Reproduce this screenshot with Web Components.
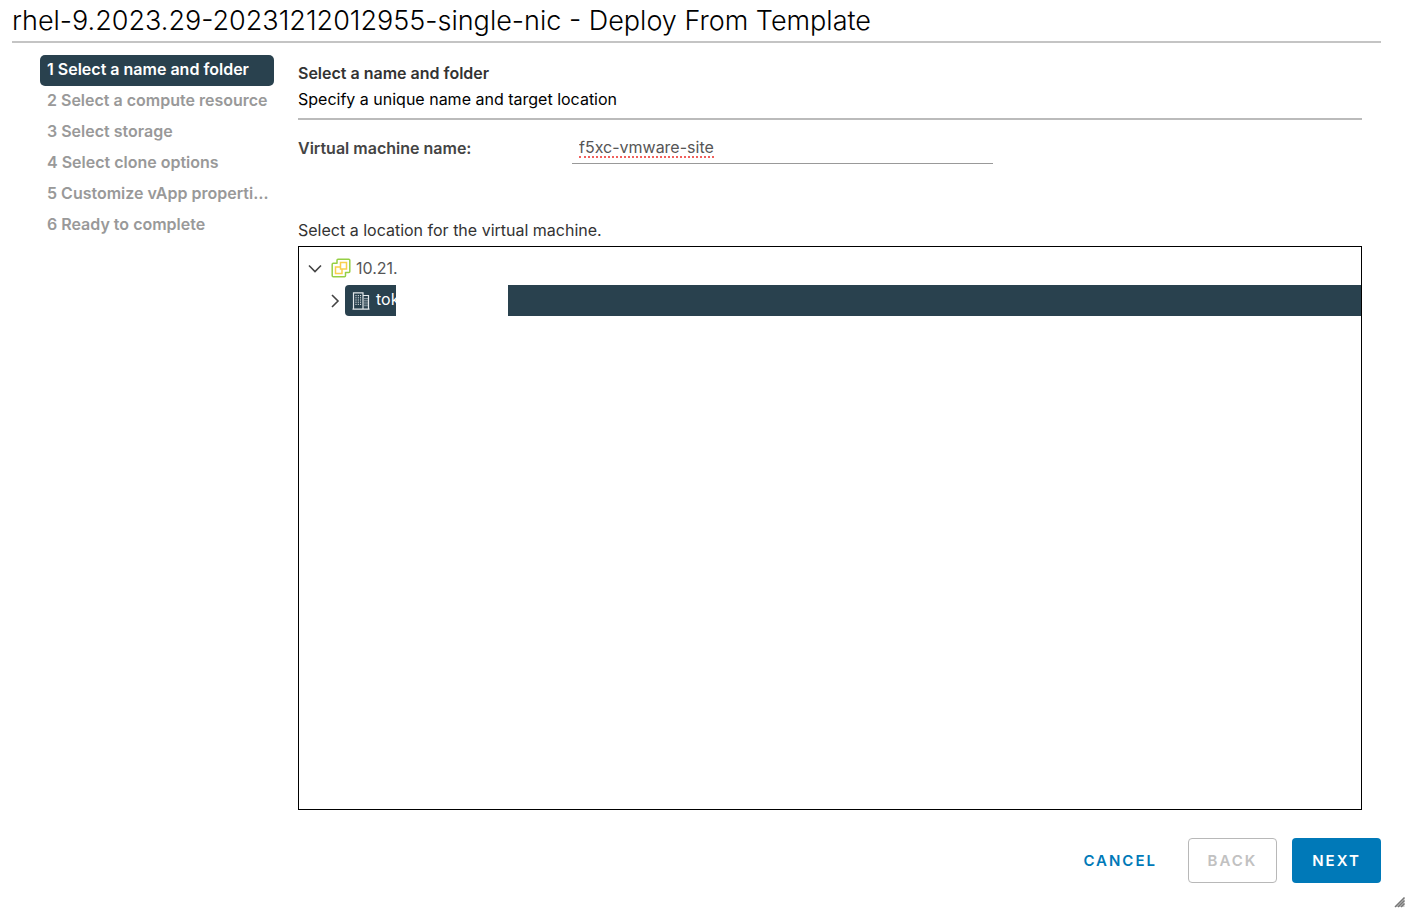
<!DOCTYPE html>
<html lang="en">
<head>
<meta charset="utf-8">
<title>Deploy From Template</title>
<style>
  html, body { margin: 0; height: 100%; background: #fff; }
  body { font: 16px/24px Inter, "Open Sans", sans-serif; color: #333; }
</style>
</head>
<body>
<wizard-dialog>
  <span slot="title">rhel-9.2023.29-20231212012955-single-nic - Deploy From Template</span>
  <wizard-steps slot="steps"></wizard-steps>
  <wizard-page slot="page">
    <span slot="heading">Select a name and folder</span>
    <span slot="description">Specify a unique name and target location</span>
    <vm-name-field></vm-name-field>
    <location-tree></location-tree>
  </wizard-page>
  <wizard-button slot="actions" kind="link">Cancel</wizard-button>
  <wizard-button slot="actions" kind="outline" disabled>Back</wizard-button>
  <wizard-button slot="actions" kind="primary">Next</wizard-button>
</wizard-dialog>

<script>
class BaseElement extends HTMLElement {
  render(html) {
    const template = document.createElement('template');
    template.innerHTML = html;
    this.attachShadow({ mode: 'open' }).append(template.content.cloneNode(true));
  }
}

customElements.define('wizard-dialog', class extends BaseElement {
  constructor() {
    super();
    this.render(`
      <style>
        :host { display: flex; flex-direction: column; box-sizing: border-box; min-height: 100vh; padding: 0 29px 29px 12px; position: relative; }
        header { border-bottom: 2px solid #c4c4c4; }
        h1 { margin: 0; padding-top: 1px; font-size: 27px; line-height: 40px; font-weight: 300; color: #000; white-space: nowrap; }
        .body { flex: 1; display: grid; grid-template-columns: 234px minmax(0, 1fr); gap: 24px; padding: 12px 19px 0 28px; }
        .body ::slotted(*) { min-width: 0; }
        footer { display: flex; justify-content: flex-end; gap: 15px; padding-top: 28px; }
        .grip { position: absolute; right: 4px; bottom: 4px; width: 12px; height: 12px; }
      </style>
      <header><h1><slot name="title"></slot></h1></header>
      <div class="body"><slot name="steps"></slot><slot name="page"></slot></div>
      <footer><slot name="actions"></slot></footer>
      <svg class="grip" viewBox="0 0 12 12" aria-hidden="true">
        <path d="M1 11 10.500 1.500V11Z" fill="#ccc"/>
        <path d="M1 11 10.500 1.500M4 11l6.500-6.500M7 11l3.500-3.500" stroke="#777" stroke-width="1.500"/>
      </svg>`);
  }
});

customElements.define('wizard-steps', class extends BaseElement {
  constructor() {
    super();
    const steps = ['Select a name and folder', 'Select a compute resource', 'Select storage',
      'Select clone options', 'Customize vApp properties', 'Ready to complete'];
    this.render(`
      <style>
        :host { display: block; }
        ol { list-style: none; margin: 0; padding: 0; }
        button { all: unset; box-sizing: border-box; display: block; width: 100%; padding: 0 5px 2px 7px; line-height: 29px;
          font-weight: 600; color: #999; white-space: nowrap; overflow: hidden; text-overflow: ellipsis; border-radius: 5px; }
        button[aria-current] { background: #29414e; color: #fff; }
      </style>
      <nav aria-label="Steps"><ol>${steps.map((s, i) =>
        `<li><button type="button" ${i ? 'disabled' : 'aria-current="step"'}>${i + 1} ${s}</button></li>`).join('')}</ol></nav>`);
  }
});

customElements.define('wizard-page', class extends BaseElement {
  constructor() {
    super();
    this.render(`
      <style>
        :host { display: flex; flex-direction: column; }
        header { padding: 6px 0 5px; border-bottom: 2px solid #bbb; }
        h2, p { margin: 0; font-size: 16px; font-weight: 400; line-height: 28px; }
        h2 { line-height: 24px; font-weight: 600; }
        p { color: #000; }
      </style>
      <header><h2><slot name="heading"></slot></h2><p><slot name="description"></slot></p></header>
      <slot></slot>`);
  }
});

customElements.define('vm-name-field', class extends BaseElement {
  constructor() {
    super();
    this.render(`
      <style>
        :host { display: grid; grid-template-columns: 274px minmax(0, 421px); padding-top: 14px; }
        label { font-weight: 600; line-height: 28px; color: #444; }
        .field { box-sizing: border-box; display: flex; align-items: flex-start; height: 30px; padding: 0 7px; border-bottom: 1px solid #999; }
        input { box-sizing: border-box; field-sizing: content; max-width: 100%; height: 24px; padding: 4px 0 0; margin: 0; border: 0;
          border-bottom: 2px dotted #f0605c; background: none; outline: 0; font: inherit; line-height: 18px; color: #565656; }
      </style>
      <label for="name">Virtual machine name:</label>
      <div class="field"><input id="name" type="text" spellcheck="false" value="f5xc-vmware-site"></div>`);
  }
});

customElements.define('location-tree', class extends BaseElement {
  constructor() {
    super();
    this.render(`
      <style>
        :host { flex: 1; display: flex; flex-direction: column; padding-top: 54px; }
        p { margin: 0; padding-bottom: 4px; color: #333; }
        .tree { flex: 1; border: 1px solid #000; padding-top: 7px; }
        .row { display: flex; align-items: center; height: 31px; }
        .root { padding: 0 0 3px 8px; line-height: 28px; color: #565656; box-sizing: border-box; }
        .child { padding-left: 28px; }
        svg { display: block; flex: none; }
        .root .icon { margin: 0 5px 0 8px; }
        .child .chevron { margin-right: 2px; }
        .node { box-sizing: border-box; width: 51px; height: 31px; display: flex; align-items: center; gap: 6px; padding-left: 7px; line-height: 26px;
          overflow: hidden; white-space: nowrap; background: #29414e; color: #fff; border-radius: 4px 0 0 4px; }
        .node span { padding-bottom: 4px; }
        .fill { flex: 1; height: 31px; margin-left: 112px; background: #29414e; }
      </style>
      <p id="caption">Select a location for the virtual machine.</p>
      <div class="tree" role="tree" aria-labelledby="caption">
        <div class="row root" role="treeitem" aria-expanded="true">
          <svg class="chevron" width="16" height="16" viewBox="0 0 16 16"><path d="M2 5.500 8 11.500l6-6" fill="none" stroke="#444" stroke-width="1.600"/></svg>
          <svg class="icon" width="20" height="20" viewBox="0 0 20 20" fill="none">
            <path d="M6 5.300V2.200Q6 1.200 7 1.200H17.800Q18.800 1.200 18.800 2.200V13.500Q18.800 14.500 17.800 14.500H14.500V17.700Q14.500 18.700 13.500 18.700H2.200Q1.200 18.700 1.200 17.700V6.300Q1.200 5.300 2.200 5.300Z" stroke="#96cf45" stroke-width="1.500" stroke-linejoin="round"/>
            <path d="M9.500 4.500h6v6.500h-6ZM9.500 9H4.500v6.500h6.500V11" stroke="#f9cf4d" stroke-width="1.500"/>
          </svg>
          <span>10.21.</span>
        </div>
        <div class="row child" role="treeitem" aria-expanded="false" aria-selected="true">
          <svg class="chevron" width="16" height="16" viewBox="0 0 16 16"><path d="M5 2l6 6-6 6" fill="none" stroke="#444" stroke-width="1.600"/></svg>
          <span class="node">
            <svg width="18" height="18" viewBox="0 0 18 18" fill="none" stroke="#e4e9ec">
              <path d="M1.500 17V.8h9.500V17M11 3.500h5.500V17M.5 17.200h17" stroke-width="1.200"/>
              <path d="M4 3v11M6.300 3v11M8.600 3v11M13 6v9M15 6v9" stroke-width="1" stroke-dasharray="1.200 1"/>
            </svg>
            <span>tok</span>
          </span>
          <span class="fill"></span>
        </div>
      </div>`);
  }
});

customElements.define('wizard-button', class extends BaseElement {
  constructor() {
    super();
    this.render(`
      <style>
        :host { display: block; }
        button { box-sizing: border-box; min-width: 89px; height: 45px; padding: 1px 15px 0; border: 1px solid transparent; border-radius: 4px;
          font: 600 15px/20px Inter, "Open Sans", sans-serif; letter-spacing: 2px; text-transform: uppercase; background: none; color: #0079b8; }
        :host([kind="outline"]) button { border-color: #b8b8b8; color: #c1c1c1; }
        :host([kind="primary"]) button { background: #0079b8; color: #fff; }
      </style>
      <button type="button"><slot></slot></button>`);
    this.shadowRoot.querySelector('button').disabled = this.hasAttribute('disabled');
  }
});
</script>
</body>
</html>
